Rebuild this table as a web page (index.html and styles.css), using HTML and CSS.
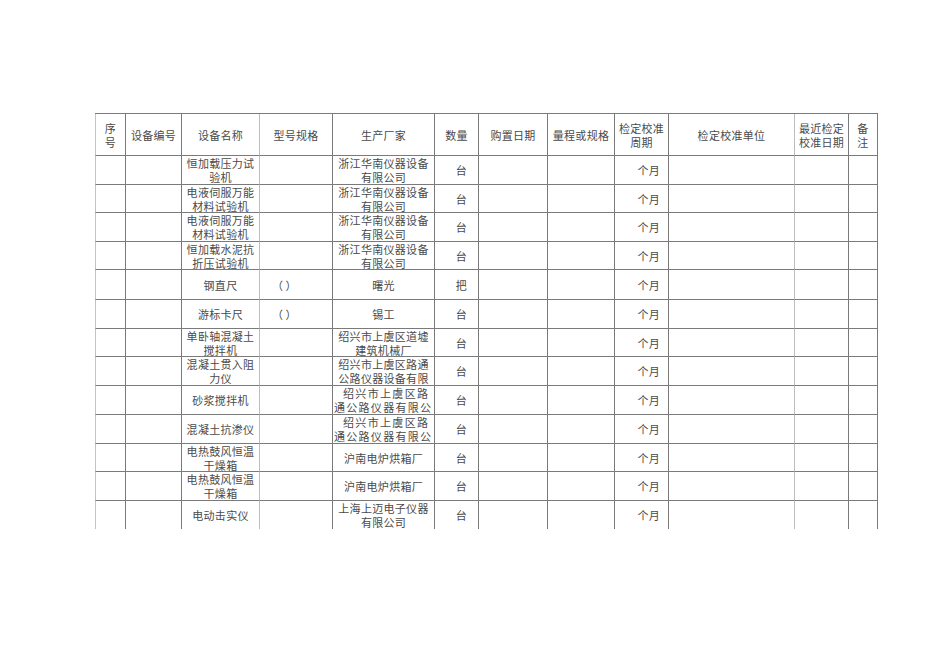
FILE: index.html
```html
<!DOCTYPE html>
<html lang="zh-CN">
<head>
<meta charset="utf-8">
<title>设备一览表</title>
<link rel="stylesheet" href="styles.css">
</head>
<body>
<div class="page">
  <div class="sheet">
    <div class="cell h">序<br>号</div>
    <div class="cell h">设备编号</div>
    <div class="cell h lr">设备名称</div>
    <div class="cell h">型号规格</div>
    <div class="cell h">生产厂家</div>
    <div class="cell h">数量</div>
    <div class="cell h">购置日期</div>
    <div class="cell h">量程或规格</div>
    <div class="cell h">检定校准<br>周期</div>
    <div class="cell h lr">检定校准单位</div>
    <div class="cell h">最近检定<br>校准日期</div>
    <div class="cell h">备<br>注</div>

    <div class="cell"></div><div class="cell"></div>
    <div class="cell lr">恒加载压力试<br>验机</div>
    <div class="cell"></div>
    <div class="cell">浙江华南仪器设备<br>有限公司</div>
    <div class="cell qty">台</div>
    <div class="cell"></div><div class="cell"></div>
    <div class="cell mon">个月</div>
    <div class="cell lr"></div><div class="cell"></div><div class="cell"></div>

    <div class="cell"></div><div class="cell"></div>
    <div class="cell lr">电液伺服万能<br>材料试验机</div>
    <div class="cell"></div>
    <div class="cell">浙江华南仪器设备<br>有限公司</div>
    <div class="cell qty">台</div>
    <div class="cell"></div><div class="cell"></div>
    <div class="cell mon">个月</div>
    <div class="cell lr"></div><div class="cell"></div><div class="cell"></div>

    <div class="cell"></div><div class="cell"></div>
    <div class="cell lr">电液伺服万能<br>材料试验机</div>
    <div class="cell"></div>
    <div class="cell">浙江华南仪器设备<br>有限公司</div>
    <div class="cell qty">台</div>
    <div class="cell"></div><div class="cell"></div>
    <div class="cell mon">个月</div>
    <div class="cell lr"></div><div class="cell"></div><div class="cell"></div>

    <div class="cell"></div><div class="cell"></div>
    <div class="cell lr">恒加载水泥抗<br>折压试验机</div>
    <div class="cell"></div>
    <div class="cell">浙江华南仪器设备<br>有限公司</div>
    <div class="cell qty">台</div>
    <div class="cell"></div><div class="cell"></div>
    <div class="cell mon">个月</div>
    <div class="cell lr"></div><div class="cell"></div><div class="cell"></div>

    <div class="cell"></div><div class="cell"></div>
    <div class="cell lr">钢直尺</div>
    <div class="cell model">（&nbsp;）</div>
    <div class="cell">曙光</div>
    <div class="cell qty">把</div>
    <div class="cell"></div><div class="cell"></div>
    <div class="cell mon">个月</div>
    <div class="cell lr"></div><div class="cell"></div><div class="cell"></div>

    <div class="cell"></div><div class="cell"></div>
    <div class="cell lr">游标卡尺</div>
    <div class="cell model">（&nbsp;）</div>
    <div class="cell">锡工</div>
    <div class="cell qty">台</div>
    <div class="cell"></div><div class="cell"></div>
    <div class="cell mon">个月</div>
    <div class="cell lr"></div><div class="cell"></div><div class="cell"></div>

    <div class="cell"></div><div class="cell"></div>
    <div class="cell lr">单卧轴混凝土<br>搅拌机</div>
    <div class="cell"></div>
    <div class="cell">绍兴市上虞区道墟<br>建筑机械厂</div>
    <div class="cell qty">台</div>
    <div class="cell"></div><div class="cell"></div>
    <div class="cell mon">个月</div>
    <div class="cell lr"></div><div class="cell"></div><div class="cell"></div>

    <div class="cell"></div><div class="cell"></div>
    <div class="cell lr">混凝土贯入阻<br>力仪</div>
    <div class="cell"></div>
    <div class="cell">绍兴市上虞区路通<br>公路仪器设备有限</div>
    <div class="cell qty">台</div>
    <div class="cell"></div><div class="cell"></div>
    <div class="cell mon">个月</div>
    <div class="cell lr"></div><div class="cell"></div><div class="cell"></div>

    <div class="cell"></div><div class="cell"></div>
    <div class="cell lr">砂浆搅拌机</div>
    <div class="cell"></div>
    <div class="cell dist"><span class="l1">绍兴市上虞区路</span><span class="l2">通公路仪器有限公</span></div>
    <div class="cell qty">台</div>
    <div class="cell"></div><div class="cell"></div>
    <div class="cell mon">个月</div>
    <div class="cell lr"></div><div class="cell"></div><div class="cell"></div>

    <div class="cell"></div><div class="cell"></div>
    <div class="cell lr">混凝土抗渗仪</div>
    <div class="cell"></div>
    <div class="cell dist"><span class="l1">绍兴市上虞区路</span><span class="l2">通公路仪器有限公</span></div>
    <div class="cell qty">台</div>
    <div class="cell"></div><div class="cell"></div>
    <div class="cell mon">个月</div>
    <div class="cell lr"></div><div class="cell"></div><div class="cell"></div>

    <div class="cell"></div><div class="cell"></div>
    <div class="cell lr">电热鼓风恒温<br>干燥箱</div>
    <div class="cell"></div>
    <div class="cell">沪南电炉烘箱厂</div>
    <div class="cell qty">台</div>
    <div class="cell"></div><div class="cell"></div>
    <div class="cell mon">个月</div>
    <div class="cell lr"></div><div class="cell"></div><div class="cell"></div>

    <div class="cell"></div><div class="cell"></div>
    <div class="cell lr">电热鼓风恒温<br>干燥箱</div>
    <div class="cell"></div>
    <div class="cell">沪南电炉烘箱厂</div>
    <div class="cell qty">台</div>
    <div class="cell"></div><div class="cell"></div>
    <div class="cell mon">个月</div>
    <div class="cell lr"></div><div class="cell"></div><div class="cell"></div>

    <div class="cell last"></div><div class="cell last"></div>
    <div class="cell last lr">电动击实仪</div>
    <div class="cell last"></div>
    <div class="cell last">上海上迈电子仪器<br>有限公司</div>
    <div class="cell last qty">台</div>
    <div class="cell last"></div><div class="cell last"></div>
    <div class="cell last mon">个月</div>
    <div class="cell last lr"></div><div class="cell last"></div><div class="cell last"></div>
  </div>
</div>
</body>
</html>
```
FILE: styles.css
```css
html, body {
  margin: 0;
  padding: 0;
  background: #ffffff;
}

.page {
  width: 950px;
  height: 672px;
  padding: 113px 0 0 95px;
  box-sizing: border-box;
  font-family: "Noto Sans CJK SC", "Noto Sans", sans-serif;
  font-size: 11px;
  letter-spacing: 0.3px;
  color: #4a4a4a;
}

.sheet {
  display: grid;
  width: 783px;
  grid-template-columns: 31px 56px 78px 73px 102px 44px 69px 67px 54px 126px 54px 29px;
  grid-template-rows: 42px 29px 28px 29px 28px 30px 29px 28px 29px 29px 29px 28px 29px 28px;
  border-top: 1px solid #7a7a7a;
}

.cell {
  box-sizing: border-box;
  border-right: 1px solid #7a7a7a;
  border-bottom: 1px solid #7a7a7a;
  display: flex;
  align-items: center;
  justify-content: center;
  text-align: center;
  line-height: 14px;
  overflow: hidden;
  white-space: nowrap;
}

.cell:nth-child(12n+1) {
  border-left: 1px solid #c4c4c4;
}

.lr {
  border-right-color: #bdbdbd;
}

.h {
  padding-top: 1px;
}

.qty {
  padding-left: 10px;
}

.mon {
  justify-content: flex-end;
  padding-right: 8px;
}

.model {
  justify-content: flex-start;
  padding-left: 12px;
  letter-spacing: 0;
}

.dist {
  flex-direction: column;
  align-items: stretch;
}

.dist .l1,
.dist .l2 {
  display: block;
  text-align: justify;
  text-align-last: justify;
  letter-spacing: 0;
}

.dist .l1 {
  margin: 0 6px 0 10px;
}

.dist .l2 {
  margin: 0 3px 0 1px;
}

.last {
  border-bottom: none;
}
```
